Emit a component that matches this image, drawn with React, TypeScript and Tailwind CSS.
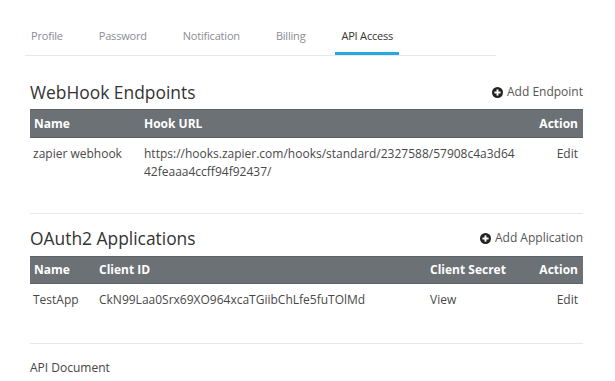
import React from "react";

const PlusCircle = () => (
  <svg width="11" height="11" viewBox="0 0 16 16" className="mr-[4px] shrink-0">
    <circle cx="8" cy="8" r="8" fill="#222" />
    <rect x="3.5" y="6.6" width="9" height="2.8" fill="#fff" />
    <rect x="6.6" y="3.5" width="2.8" height="9" fill="#fff" />
  </svg>
);

const tabs = ["Profile", "Password", "Notification", "Billing", "API Access"];

export default function App() {
  return (
    <div
      className="w-[615px] h-[381px] bg-white overflow-hidden text-[#484848]"
      style={{ fontFamily: '"Open Sans", "Liberation Sans", sans-serif' }}
    >
      <nav className="ml-[25px] w-[471px] flex gap-[24px] border-b border-[#e6e8eb] pt-[27px]">
        {tabs.map((t) => (
          <div
            key={t}
            className={
              "px-[6px] pb-[7px] leading-[18px] text-[11px] tracking-[-0.2px] border-b-[3px] " +
              (t === "API Access"
                ? "border-[#27a8de] text-[#333]"
                : "border-transparent text-[#8a8d94]")
            }
          >
            {t}
          </div>
        ))}
      </nav>

      <div className="ml-[30px] w-[553px]">
        <section className="mt-[24px]">
          <div className="flex items-center justify-between h-[24px]">
            <h2 className="text-[17.4px] leading-[24px] text-[#333]">WebHook Endpoints</h2>
            <div className="flex items-center text-[12px] text-[#555]">
              <PlusCircle />
              Add Endpoint
            </div>
          </div>
          <table className="mt-[5px] w-full border-collapse text-[12px] table-fixed">
            <colgroup>
              <col className="w-[108px]" />
              <col />
              <col className="w-[58px]" />
            </colgroup>
            <thead>
              <tr className="bg-[#6c7176] text-white h-[28px] border-y border-[#5c6166]">
                <th className="text-left font-bold px-[4px]">Name</th>
                <th className="text-left font-bold px-[6px]">Hook URL</th>
                <th className="text-right font-bold pr-[5px]">Action</th>
              </tr>
            </thead>
            <tbody>
              <tr className="align-top leading-[18px]">
                <td className="pl-[3px] pt-[7px]">zapier webhook</td>
                <td className="px-[6px] pt-[7px] break-all">
                  https://hooks.zapier.com/hooks/standard/2327588/57908c4a3d6442feaaa4ccff94f92437/
                </td>
                <td className="text-right pr-[5px] pt-[7px]">Edit</td>
              </tr>
            </tbody>
          </table>
        </section>

        <div className="mt-[32px] border-t border-[#e8e8e8]" />

        <section className="mt-[12px]">
          <div className="flex items-center justify-between h-[24px]">
            <h2 className="text-[17.4px] leading-[24px] text-[#333]">OAuth2 Applications</h2>
            <div className="flex items-center text-[12px] text-[#555]">
              <PlusCircle />
              Add Application
            </div>
          </div>
          <table className="mt-[6px] w-full border-collapse text-[12px] table-fixed">
            <colgroup>
              <col className="w-[63px]" />
              <col />
              <col className="w-[105px]" />
              <col className="w-[54px]" />
            </colgroup>
            <thead>
              <tr className="bg-[#6c7176] text-white h-[27px] border-y border-[#5c6166]">
                <th className="text-left font-bold px-[4px]">Name</th>
                <th className="text-left font-bold px-[6px]">Client ID</th>
                <th className="text-left font-bold px-[6px]">Client Secret</th>
                <th className="text-right font-bold pr-[5px]">Action</th>
              </tr>
            </thead>
            <tbody>
              <tr className="align-top leading-[18px]">
                <td className="pl-[3px] pt-[7px]">TestApp</td>
                <td className="px-[6px] pt-[7px]">CkN99Laa0Srx69XO964xcaTGiibChLfe5fuTOlMd</td>
                <td className="px-[6px] pt-[7px]">View</td>
                <td className="text-right pr-[5px] pt-[7px]">Edit</td>
              </tr>
            </tbody>
          </table>
        </section>

        <div className="mt-[34px] border-t border-[#e8e8e8]" />

        <div className="mt-[15px] text-[12px] leading-[18px] text-[#444]">API Document</div>
      </div>
    </div>
  );
}
